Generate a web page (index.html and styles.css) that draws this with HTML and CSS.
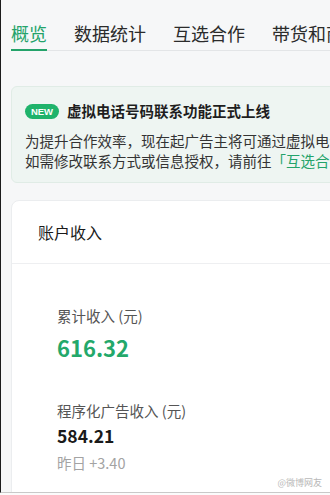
FILE: index.html
```html
<!DOCTYPE html>
<html lang="zh-CN">
<head>
    <meta charset="UTF-8">
    <meta name="viewport" content="width=device-width, initial-scale=1.0">
    <title>概览</title>
    <link rel="stylesheet" href="styles.css">
</head>
<body>

    <div class="frame">
        <div class="page">
            <div class="tabs">
                <div class="tab active">概览</div>
                <div class="tab">数据统计</div>
                <div class="tab">互选合作</div>
                <div class="tab">带货和商品</div>
            </div>

            <div class="notice">
                <div class="notice-title">
                    <span class="badge">NEW</span>
                    <span>虚拟电话号码联系功能正式上线</span>
                </div>
                <p class="notice-text">为提升合作效率，现在起广告主将可通过虚拟电话号码联系你，</p>
                <p class="notice-text">如需修改联系方式或信息授权，请前往<a class="link">「互选合作」</a></p>
            </div>

            <div class="card">
                <div class="card-head">账户收入</div>
                <div class="card-body">
                    <div class="label">累计收入 (元)</div>
                    <div class="total">616.32</div>

                    <div class="label second">程序化广告收入 (元)</div>
                    <div class="amount">584.21</div>
                    <div class="delta">昨日 +3.40</div>
                </div>
            </div>
        </div>
        <div class="mark">@微博网友</div>
    </div>

</body>
</html>
```

FILE: styles.css
```css
html {
    background: #fbfbfb;
}

body {
    margin: 0;
    font-family: "Noto Sans CJK SC", "Liberation Sans", sans-serif;
    color: #222;
    overflow: hidden;
}

.frame {
    position: relative;
    width: 329px;
    height: 492px;
    border-left: 1px solid #1c1c1c;
    border-bottom: 1px solid #c9c9c9;
    background: #f6f7f8;
    overflow: hidden;
}

.page {
    width: 640px;
    padding-left: 10px;
}

/* pestañas */
.tabs {
    display: flex;
    gap: 27px;
    padding-top: 21px;
    border-bottom: 1px solid #e3e5e7;
}

.tab {
    font-size: 18px;
    line-height: 24px;
    padding-bottom: 4px;
    margin-bottom: -1px;
    color: #2b2b2b;
    white-space: nowrap;
    border-bottom: 2px solid transparent;
}

.tab.active {
    color: #24a36a;
    border-bottom-color: #24a36a;
}

/* aviso */
.notice {
    margin-top: 35px;
    padding: 14px 14px 12px 13px;
    background: #eef5f2;
    border: 1px solid #e0ece6;
    border-radius: 6px;
}

.notice-title {
    display: flex;
    align-items: center;
    font-size: 14.5px;
    line-height: 20px;
    font-weight: bold;
    color: #1e1e1e;
    white-space: nowrap;
}

.badge {
    display: inline-block;
    width: 34px;
    height: 15px;
    line-height: 15px;
    margin-right: 8px;
    border-radius: 8px;
    background: #1fb36b;
    color: #fff;
    font-family: "Liberation Sans", sans-serif;
    font-size: 9.5px;
    font-weight: bold;
    text-align: center;
}

.notice-text {
    margin: 0;
    font-size: 14.5px;
    line-height: 19.5px;
    color: #333;
    white-space: nowrap;
}

.notice-title + .notice-text {
    margin-top: 10px;
}

.link {
    color: #24a36a;
}

/* tarjeta */
.card {
    margin-top: 17px;
    background: #fff;
    border: 1px solid #ebedef;
    border-radius: 8px;
    height: 400px;
}

.card-head {
    padding: 20px 26px;
    font-size: 16px;
    line-height: 22px;
    color: #1a1a1a;
    border-bottom: 1px solid #eeeff1;
}

.card-body {
    padding: 42px 45px 0;
}

.label {
    font-size: 14.5px;
    line-height: 20px;
    color: #555;
}

.label.second {
    margin-top: 40px;
}

.total {
    margin-top: 7px;
    font-size: 22px;
    line-height: 28px;
    font-weight: bold;
    color: #23a86a;
}

.amount {
    margin-top: 3px;
    font-size: 17.5px;
    line-height: 24px;
    font-weight: bold;
    color: #1a1a1a;
}

.delta {
    margin-top: 5px;
    font-size: 14.5px;
    line-height: 20px;
    color: #a3a3a3;
}

.mark {
    position: absolute;
    right: 8px;
    bottom: 3px;
    font-size: 9px;
    color: #b8b8b8;
}
```
